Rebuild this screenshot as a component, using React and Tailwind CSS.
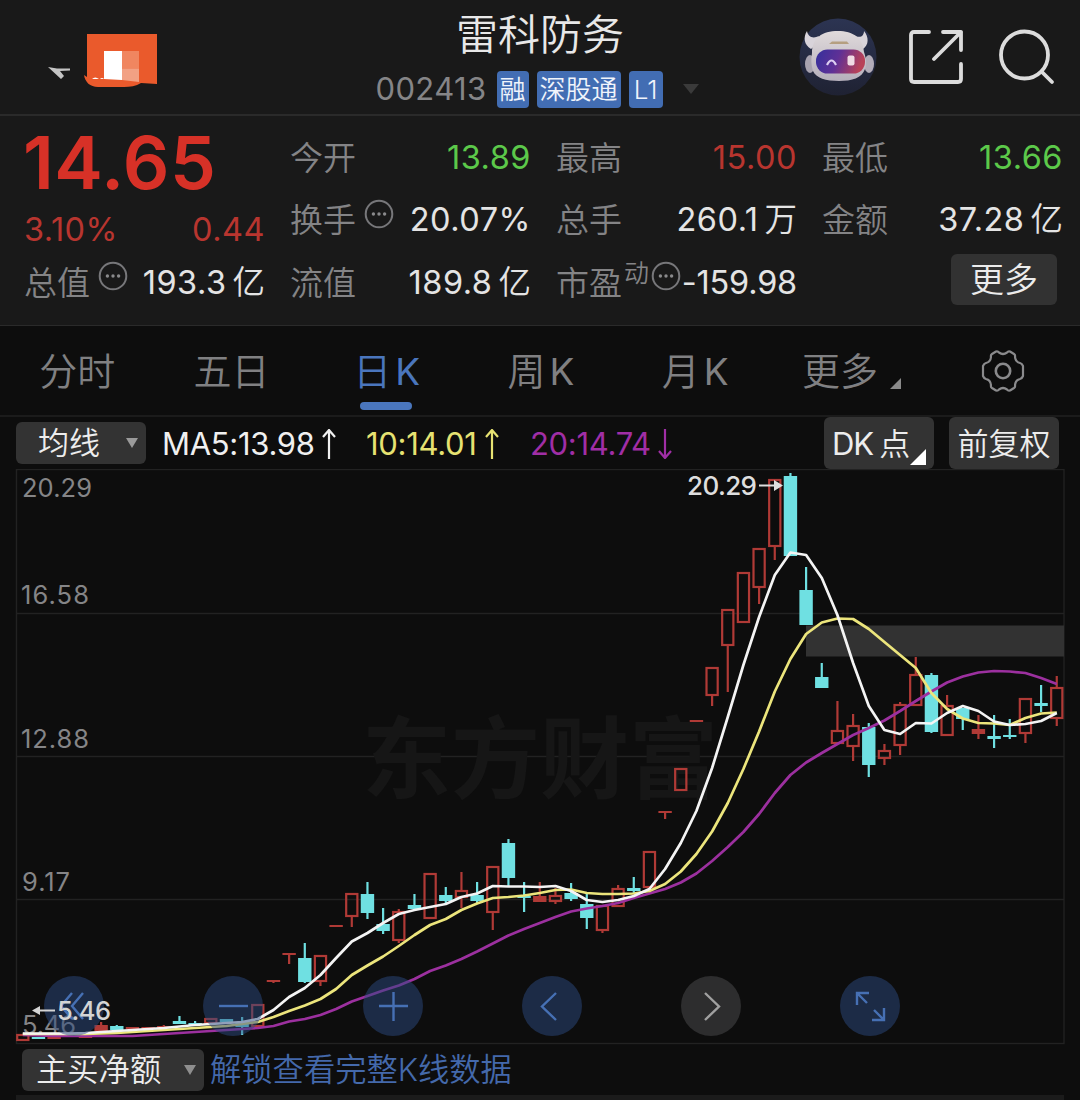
const UP = '#b03a36'
const DOWN = '#6fe0e2'

// Candle spacing of the daily chart
const X0 = 22.8
const STEP = 15.666

// [type, high, body top, body bottom, low]
// u = up (hollow), f = up (filled), d = down
const candles = [
  ['u', 1035, 1035, 1040, 1040],
  ['d', 1037, 1037, 1039, 1039],
  ['f', 1036, 1036, 1039, 1039],
  ['d', 1035, 1035, 1036, 1036],
  ['f', 1035, 1036, 1038, 1038],
  ['f', 1022, 1025, 1031, 1031],
  ['d', 1025, 1026, 1030, 1030],
  ['f', 1027, 1027, 1029, 1029],
  ['f', 1027, 1027, 1029, 1029],
  ['f', 1025, 1026, 1028, 1028],
  ['d', 1016, 1021, 1024, 1024],
  ['d', 1021, 1023, 1025, 1025],
  ['u', 1019, 1019, 1023, 1023],
  ['d', 1019, 1019, 1022, 1022],
  ['d', 1017, 1022, 1027, 1035],
  ['u', 1005, 1005, 1026, 1026],
  ['f', 980, 980, 982, 983],
  ['f', 953, 953, 955, 964],
  ['d', 943, 958, 982, 983],
  ['u', 956, 956, 981, 986],
  ['f', 925, 925, 927, 927],
  ['u', 894, 894, 916, 927],
  ['d', 882, 894, 913, 919],
  ['d', 908, 924, 931, 934],
  ['u', 909, 912, 940, 943],
  ['d', 894, 905, 909, 910],
  ['u', 874, 874, 918, 918],
  ['d', 887, 895, 901, 903],
  ['u', 872, 891, 897, 908],
  ['d', 882, 895, 901, 904],
  ['u', 867, 867, 912, 930],
  ['d', 839, 843, 878, 887],
  ['d', 882, 896, 898, 912],
  ['f', 882, 896, 902, 902],
  ['u', 888, 896, 901, 904],
  ['d', 883, 893, 899, 901],
  ['d', 892, 904, 918, 929],
  ['u', 906, 906, 930, 933],
  ['u', 885, 889, 906, 906],
  ['d', 877, 888, 891, 893],
  ['u', 852, 852, 887, 887],
  ['f', 811, 811, 813, 819],
  ['u', 769, 769, 790, 790],
  ['f', 720, 720, 722, 722],
  ['u', 668, 668, 695, 706],
  ['u', 610, 610, 645, 692],
  ['u', 573, 573, 622, 622],
  ['u', 549, 549, 587, 604],
  ['u', 480, 480, 546, 560],
  ['d', 473, 476, 556, 556],
  ['d', 567, 590, 625, 625],
  ['d', 663, 677, 688, 688],
  ['u', 701, 731, 743, 743],
  ['u', 714, 726, 746, 761],
  ['d', 723, 727, 765, 777],
  ['u', 744, 751, 758, 765],
  ['u', 702, 705, 745, 755],
  ['u', 657, 675, 705, 705],
  ['d', 673, 675, 732, 733],
  ['u', 695, 706, 735, 735],
  ['d', 708, 708, 719, 730],
  ['f', 715, 729, 734, 739],
  ['d', 715, 736, 739, 748],
  ['d', 719, 735, 737, 739],
  ['u', 699, 699, 733, 743],
  ['d', 685, 703, 706, 712],
  ['u', 676, 688, 718, 726],
]

const ma5 = [
  1033.5, 1033.5, 1033.5, 1033.5, 1033, 1032, 1031, 1030, 1029, 1028, 1026.5, 1025, 1024, 1023, 1022, 1019, 1010, 997,
  988, 975, 958, 941.5, 933, 923, 914, 910, 907, 904, 897, 893.5, 886, 886.5, 886.5, 887, 886, 891, 900, 902, 900, 896,
  889, 869, 843, 811, 768, 717, 665, 617, 575, 552.5, 555, 578, 615, 663, 706, 730, 734, 723, 723.5, 713, 706, 711,
  721.5, 725, 724, 721, 713,
]

const ma10 = [
  1034, 1034, 1034, 1034, 1034, 1033.5, 1033, 1032, 1031, 1030, 1029, 1028, 1027, 1026, 1024, 1022, 1017, 1011, 1005.5,
  999, 989, 975, 965.5, 956.5, 946, 935, 925, 919, 910, 903.5, 898, 897, 895.5, 893, 890, 889.5, 893, 894, 894, 893.5,
  891, 884, 871.5, 854, 831.5, 803, 769, 731.5, 691.5, 659, 634, 622.5, 618.5, 619, 629, 642, 655, 668, 693, 709,
  718.5, 723, 723.5, 725, 718, 713.5, 712.5,
]

const ma20 = [
  1035, 1035.5, 1036, 1036, 1036, 1036, 1036, 1036, 1035, 1034, 1033, 1032, 1031, 1030, 1029, 1028, 1026, 1021.5, 1019,
  1015, 1009, 1001.5, 996, 990.5, 985.5, 979, 971, 965.5, 959, 951.5, 943.5, 935.5, 929, 923, 917, 911.5, 908.5, 906,
  903, 898, 893.5, 889, 882.5, 873.5, 861, 847, 832, 814, 793, 775, 762.5, 753, 744, 735, 728, 720.5, 711, 701, 691.5,
  682.5, 676.5, 672.5, 671, 671.5, 673, 678, 684,
]

const toPoints = (values) => values.map((y, i) => `${(X0 + i * STEP).toFixed(1)},${y}`).join(' ')

function Candle({ data, index }) {
  const [type, high, top, bottom, low] = data
  const x = X0 + index * STEP
  const color = type === 'd' ? DOWN : UP
  return (
    <g stroke={color} strokeWidth="2.2">
      {high < top && <line x1={x} x2={x} y1={high} y2={top} />}
      {low > bottom && <line x1={x} x2={x} y1={bottom} y2={low} />}
      {type === 'u' ? (
        <rect x={x - 5.6} y={top} width="11.2" height={bottom - top} fill="none" />
      ) : (
        <rect x={x - 6.7} y={top} width="13.4" height={bottom - top} fill={color} stroke="none" />
      )}
    </g>
  )
}

function InfoDots() {
  return (
    <svg className="w-[30px] h-[30px] shrink-0" viewBox="0 0 30 30" fill="none">
      <circle cx="15" cy="15" r="13.3" stroke="#77777a" strokeWidth="2" />
      <g fill="#8a8a8c">
        <circle cx="9.4" cy="15" r="1.7" />
        <circle cx="15" cy="15" r="1.7" />
        <circle cx="20.6" cy="15" r="1.7" />
      </g>
    </svg>
  )
}

function Stat({ label, value, unit, color = 'text-[#e4e4e4]', sup, info }) {
  return (
    <div className="h-[62.5px] flex items-center justify-between whitespace-nowrap">
      <div className="flex items-center -ml-px text-[33px] text-[#848486]">
        {label}
        {sup && <span className="text-[25px] mb-5 ml-0.5">{sup}</span>}
        {info && (
          <span className={sup ? 'mb-3.5 ml-0.5' : 'mb-3.5 ml-2'}>
            <InfoDots />
          </span>
        )}
      </div>
      <div className={`flex text-[32.5px] font-normal ${sup ? 'tracking-[-0.2px]' : 'tracking-[0.5px]'} ${color}`}>
        {value}
        {unit && <span className="ml-1.5 font-[350] tracking-normal">{unit}</span>}
      </div>
    </div>
  )
}

function Arrow({ down }) {
  return (
    <svg className="w-4 h-[30px]" viewBox="0 0 16 30" fill="none" stroke="currentColor" strokeWidth="2.2">
      {down ? <path d="M8 0V29M2 22l6 7 6-7" /> : <path d="M8 30V1M2 8l6-7 6 7" />}
    </svg>
  )
}

function Robot() {
  return (
    <svg className="w-[78px] h-[78px]" viewBox="0 0 78 78">
      <defs>
        <linearGradient id="visor" x1="0" x2="1" y1="0" y2="0.2">
          <stop offset="0" stopColor="#34309c" />
          <stop offset="0.5" stopColor="#5f3096" />
          <stop offset="1" stopColor="#b84258" />
        </linearGradient>
        <linearGradient id="shell" x1="0" x2="0" y1="0" y2="1">
          <stop offset="0" stopColor="#e0dadb" />
          <stop offset="1" stopColor="#b5afbb" />
        </linearGradient>
        <linearGradient id="disc" x1="0" x2="0" y1="0" y2="1">
          <stop offset="0" stopColor="#2c3452" />
          <stop offset="1" stopColor="#1f2233" />
        </linearGradient>
      </defs>
      <circle cx="39" cy="39" r="38.5" fill="url(#disc)" />
      <path
        d="M8 13C4 19 5 27 12 31L17 27 20 18C14 21 9 19 8 13ZM65 13C70 19 70 27 64 31L58 26 55 17C61 21 65 18 65 13Z"
        fill="#d9d4da"
      />
      <ellipse cx="11" cy="46" rx="5" ry="9" fill="#a8a3b0" />
      <ellipse cx="70" cy="46" rx="5" ry="9" fill="#b3adb9" />
      <path
        d="M13 35C13 20 23 13 39 13C54 13 64 20 65 34C67 40 68 46 66 51C63 60 53 63 40 63C27 63 17 60 14 53C12 47 12 41 13 35Z"
        fill="url(#shell)"
      />
      <rect x="17" y="31.5" width="49" height="24" rx="11.5" fill="url(#visor)" />
      <path d="M30 26L33 23.500H48L50 26Z" fill="#b59f80" />
      <path d="M28 47Q32.500 38 37 47" stroke="#ddcff2" strokeWidth="2.2" fill="none" />
      <rect x="48.5" y="37.500" width="7" height="10" rx="2" fill="#f0dbe4" />
    </svg>
  )
}

function Header() {
  return (
    <header className="h-[116px] grid grid-cols-[340px_400px_1fr] items-center border-b-2 border-[#2a2a2a]">
      <svg className="w-[340px] h-[114px]" viewBox="0 0 340 114">
        <path d="M48 67L57 68.500 70 68.500V70.500L60 71 64 76 61 79Z" fill="#c4c4c4" />
        <path d="M87 34H157V84L141 83C136 86 130 87 124 87H98C90 87 85 82 84 75L87 77Z" fill="#ea5a2c" />
        <path d="M104 51H122V80L104 79Z" fill="#fff" />
        <path d="M122 51H139V68.500H122Z" fill="#f08660" />
        <path d="M122 68.500H139V82L122 80Z" fill="#f2a184" />
        <path d="M92 79Q95 76 99 79ZM100 79Q102 77 104 79Z" fill="#fff" />
      </svg>
      <div className="flex flex-col items-center pt-1">
        <h1 className="text-[42px] leading-[50px] text-[#e8e8e8]">雷科防务</h1>
        <div className="flex items-center text-[31px] text-[#858587] h-[38px] mt-2.5 -ml-1.5 whitespace-nowrap">
          <span className="font-[370] tracking-[0.4px] mr-2.5">002413</span>
          <span className="flex justify-center items-center w-8 h-[37px] rounded bg-[#426db3] text-[26px] text-[#f0f4fb] mr-2">融</span>
          <span className="flex justify-center items-center w-[84px] h-[37px] rounded bg-[#426db3] text-[26px] text-[#f0f4fb] mr-2">深股通</span>
          <span className="flex justify-center items-center w-[34px] h-[37px] rounded bg-[#426db3] text-[26px] text-[#f0f4fb]">L1</span>
          <svg className="w-4 h-2.5 ml-5" viewBox="0 0 16 10">
            <path d="M0 0H16L8 10Z" fill="#3a3a3a" />
          </svg>
        </div>
      </div>
      <div className="flex items-center justify-end pr-[25px]">
        <Robot />
        <svg className="w-[54px] h-[54px] ml-8" viewBox="0 0 54 54" fill="none" stroke="#dcdcdc" strokeWidth="3.8" strokeLinecap="round">
          <path d="M20 2H5Q2 2 2 5V49Q2 52 5 52H49Q52 52 52 49V34" />
          <path d="M34 2H52V20M52 2L25 29" strokeLinejoin="round" />
        </svg>
        <svg className="w-14 h-14 ml-9" viewBox="0 0 56 56" fill="none" stroke="#dcdcdc" strokeWidth="3.8" strokeLinecap="round">
          <circle cx="25.5" cy="26" r="23.500" />
          <path d="M43 43L53 53" />
        </svg>
      </div>
    </header>
  )
}

function Quote() {
  return (
    <section className="h-[210px] border-b border-[#2a2a2a] px-[25px] pt-[11px] grid grid-cols-[240px_240px_240px_240px] gap-x-[26px]">
      <div>
        <div className="h-[78px] pb-[7px] -ml-0.5 flex items-center text-[73px] font-semibold tracking-[0.5px] text-[#d73127] leading-none">14.65</div>
        <div className="h-[47px] pt-1 flex items-center justify-between text-[32.5px] font-normal tracking-[0.5px] text-[#b8352f]">
          <span className="-ml-px">3.10%</span>
          <span>0.44</span>
        </div>
        <Stat label="总值" info value="193.3" unit="亿" />
      </div>
      <div>
        <Stat label="今开" value="13.89" color="text-[#5cc94a]" />
        <Stat label="换手" info value="20.07%" />
        <Stat label="流值" value="189.8" unit="亿" />
      </div>
      <div>
        <Stat label="最高" value="15.00" color="text-[#b8352f]" />
        <Stat label="总手" value="260.1" unit="万" />
        <Stat label="市盈" sup="动" info value="-159.98" />
      </div>
      <div>
        <Stat label="最低" value="13.66" color="text-[#5cc94a]" />
        <Stat label="金额" value="37.28" unit="亿" />
        <button className="block ml-auto mr-1.5 mt-0.5 w-[106px] h-[51px] rounded-md bg-[#323232] text-[34px] leading-[52px] text-[#ececec]">
          更多
        </button>
      </div>
    </section>
  )
}

const tabs = ['分时', '五日', '日K', '周K', '月K', '更多']

function Tabs() {
  return (
    <nav className="h-[91px] grid grid-cols-7 border-b-2 border-[#1b1b1b] text-[38px] text-[#808082]">
      {tabs.map((tab) => (
        <div key={tab} className={`relative flex items-center justify-center pt-0.5 ${tab === '日K' ? 'text-[#4a76bd]' : ''}`}>
          <span className={tab === '更多' ? 'ml-1.5' : ''}>{tab.replace('K', '')}</span>
          {tab.endsWith('K') && <span className="text-[37px] font-normal ml-1 -mr-0.5">K</span>}
          {tab === '更多' && (
            <svg className="w-[11px] h-[11px] ml-3 mt-6" viewBox="0 0 11 11">
              <path d="M11 0V11H0Z" fill="#8a8a8a" />
            </svg>
          )}
          {tab === '日K' && <span className="absolute bottom-[5px] w-[52px] h-2 rounded bg-[#4a76bd]" />}
        </div>
      ))}
      <div className="flex items-center justify-center">
        <svg className="w-11 h-11" viewBox="0 0 44 44" fill="none" stroke="#8a8a8c" strokeWidth="2.2">
          <path
            strokeLinejoin="round"
            d="M15 2.5Q17 2 18 3.500Q22 6.500 26 3.500Q27 2 29 2.500L33 5Q34.500 6 34 8Q34.500 13 39 14Q41 14.500 42 17V27Q41 29.500 39 30Q34.500 31 34 36Q34.500 38 33 39L29 41.500Q27 42 26 40.500Q22 37.500 18 40.500Q17 42 15 41.500L11 39Q9.500 38 10 36Q9.500 31 5 30Q3 29.500 2 27V17Q3 14.500 5 14Q9.500 13 10 8Q9.500 6 11 5Z"
          />
          <circle cx="22" cy="22" r="7.200" strokeWidth="2.600" />
        </svg>
      </div>
    </nav>
  )
}

function Indicators() {
  return (
    <div className="h-[52px] flex items-center pl-4 pr-[21px] text-[31px] whitespace-nowrap">
      <button className="w-[130px] h-[42px] rounded-md bg-[#333] text-[#ededed] flex items-center justify-between pl-[22px] pr-2">
        <span className="pt-px">均线</span>
        <svg className="w-3 h-2.5" viewBox="0 0 12 10">
          <path d="M0 0H12L6 10Z" fill="#9a9a9a" />
        </svg>
      </button>
      <div className="flex items-center w-[204px] ml-4 pt-0.5 text-[#f0f0f0]">
        <span className="w-[159px] tracking-[-0.3px] font-normal">MA5:13.98</span>
        <Arrow />
      </div>
      <div className="flex items-center w-[164px] pt-0.5 text-[#e6e272]">
        <span className="w-[118px] tracking-[-0.3px] font-normal">10:14.01</span>
        <Arrow />
      </div>
      <div className="flex items-center pt-0.5 text-[#a02ea6]">
        <span className="w-[127px] tracking-[-0.3px] font-normal">20:14.74</span>
        <Arrow down />
      </div>
      <button className="relative ml-auto w-[110px] h-[52px] rounded-md bg-[#333] text-[#ededed] text-left pl-2 pt-0.5">
        <span className="font-normal tracking-[-1px]">DK</span>
        <span className="ml-1.5">点</span>
        <svg className="absolute right-2 bottom-1 w-4 h-4" viewBox="0 0 16 16">
          <path d="M16 0V16H0Z" fill="#fff" />
        </svg>
      </button>
      <button className="ml-[15px] w-[110px] h-[52px] rounded-md bg-[#333] text-[#ededed] pt-0.5">前复权</button>
    </div>
  )
}

const controls = [
  { name: 'first', path: 'M28 17L17 30 28 43M39 17L28 30 39 43' },
  { name: 'zoom-out', path: 'M16 30H45' },
  { name: 'zoom-in', path: 'M16 30H45M30.500 16V45' },
  { name: 'prev', path: 'M34 17L20 30.500 34 44' },
  { name: 'next', path: 'M24 17L38 30.500 24 44', muted: true },
  { name: 'fullscreen', path: 'M29 17H17V29M17 17L27 27M34 34L44 44M44 32V44H32' },
]

function Chart() {
  return (
    <div className="relative h-[576px]">
      <svg className="block w-full h-full" viewBox="0 469 1080 576">
        <g stroke="#222" strokeWidth="1.4" fill="none">
          <rect x="16.500" y="469.500" width="1047.500" height="574" />
          <path d="M17 613.500H1064M17 756.500H1064M17 899.500H1064" />
        </g>
        <text x="362" y="791" fontSize="89" fontWeight="700" fill="#161616">东方财富</text>
        <rect x="806" y="625.500" width="258" height="31" fill="#323232" />
        <g fill="#858587" fontSize="25.500" fontWeight="400">
          <text x="22" y="497" textLength="70">20.29</text>
          <text x="21" y="604" textLength="68">16.58</text>
          <text x="21" y="748" textLength="68">12.88</text>
          <text x="22" y="891" textLength="48">9.17</text>
          <text x="22" y="1034" textLength="54">5.46</text>
        </g>
        {candles.map((c, i) => (
          <Candle key={i} data={c} index={i} />
        ))}
        <g fill="none" strokeWidth="2.700" strokeLinejoin="round">
          <polyline points={toPoints(ma20)} stroke="#9c309f" />
          <polyline points={toPoints(ma10)} stroke="#ece57c" />
          <polyline points={toPoints(ma5)} stroke="#f4f4f4" />
        </g>
        <g fill="#dedede" fontSize="26" fontWeight="450">
          <text x="687" y="495" textLength="70">20.29</text>
          <path d="M759 484.500H774V480L783 485.500 774 491V486.500H759Z" />
        </g>
      </svg>
      <div className="absolute left-11 bottom-[9px] flex gap-[99.3px]">
        {controls.map(({ name, path, muted }) => (
          <button key={name} aria-label={name} className={`w-[60px] h-[60px] rounded-full ${muted ? 'bg-[#2d2d2e]' : 'bg-[#2c4a80]/50'}`}>
            <svg viewBox="0 0 60 60" fill="none" stroke={muted ? '#a0a0a0' : '#4670b4'} strokeWidth="2.400">
              <path d={path} />
            </svg>
          </button>
        ))}
      </div>
      {/* Lowest price marker sits above the controls */}
      <svg className="absolute left-8 bottom-5 w-20 h-8" viewBox="0 0 80 32" fill="#d4d4d4">
        <path d="M0 17.500L8 13V16.500H23V18.500H8V22Z" />
        <text x="25" y="26.500" fontSize="25.500" fontWeight="450" textLength="54">5.46</text>
      </svg>
    </div>
  )
}

function Footer() {
  return (
    <div className="h-[55px] flex flex-col justify-between">
      <div className="flex items-center pl-[22px] pt-0.5 text-[31.3px] whitespace-nowrap">
        <button className="w-[182px] h-[42px] rounded-md bg-[#333] text-[#ededed] flex items-center justify-between pl-3.5 pr-2">
          主买净额
          <svg className="w-3 h-2.5" viewBox="0 0 12 10">
            <path d="M0 0H12L6 10Z" fill="#8e8e8e" />
          </svg>
        </button>
        <span className="ml-1.5 text-[#4469ab]">解锁查看完整K线数据</span>
      </div>
      <div className="h-[5px] ml-4 mr-4 bg-[#1b1b1b]" />
    </div>
  )
}

export default function App() {
  return (
    <div className="w-[1080px] h-[1100px] overflow-hidden bg-[#0d0d0d] font-[Inter,'Noto_Sans_CJK_SC',sans-serif] font-[350]">
      <div className="bg-[#191919]">
        <Header />
        <Quote />
      </div>
      <Tabs />
      <Indicators />
      <Chart />
      <Footer />
    </div>
  )
}
